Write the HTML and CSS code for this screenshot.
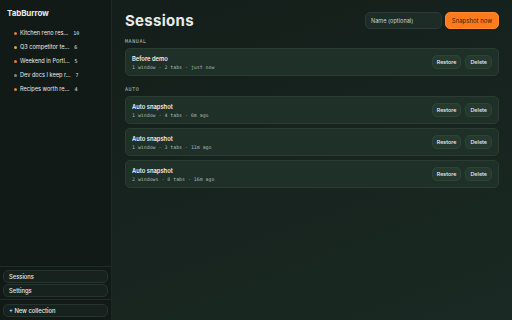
FILE: index.html
```html
<!DOCTYPE html>
<html lang="en">
<head>
  <meta charset="UTF-8" />
  <title>TabBurrow - Sessions</title>
  <link rel="stylesheet" href="styles.css">
</head>
<body>
  <aside class="sidebar">
    <div class="brand">TabBurrow</div>
    <ul class="collections">
      <li><span class="dot orange"></span><span class="name">Kitchen reno res...</span><span class="count">10</span></li>
      <li><span class="dot amber"></span><span class="name">Q3 competitor te...</span><span class="count">6</span></li>
      <li><span class="dot orange"></span><span class="name">Weekend in Portl...</span><span class="count">5</span></li>
      <li><span class="dot grey"></span><span class="name">Dev docs I keep r...</span><span class="count">7</span></li>
      <li><span class="dot orange"></span><span class="name">Recipes worth re...</span><span class="count">4</span></li>
    </ul>
    <div class="side-nav">
      <button class="side-btn">Sessions</button>
      <button class="side-btn">Settings</button>
    </div>
    <div class="side-foot">
      <button class="side-btn">+ New collection</button>
    </div>
  </aside>

  <main class="main">
    <div class="header">
      <h1>Sessions</h1>
      <input class="name-input" placeholder="Name (optional)" />
      <button class="snap-btn">Snapshot now</button>
    </div>

    <div class="group-label">MANUAL</div>
    <div class="card">
      <div class="info">
        <div class="title">Before demo</div>
        <div class="meta">1 window · 2 tabs · just now</div>
      </div>
      <button class="btn">Restore</button>
      <button class="btn">Delete</button>
    </div>

    <div class="group-label">AUTO</div>
    <div class="card">
      <div class="info">
        <div class="title">Auto snapshot</div>
        <div class="meta">1 window · 4 tabs · 6m ago</div>
      </div>
      <button class="btn">Restore</button>
      <button class="btn">Delete</button>
    </div>
    <div class="card">
      <div class="info">
        <div class="title">Auto snapshot</div>
        <div class="meta">1 window · 3 tabs · 11m ago</div>
      </div>
      <button class="btn">Restore</button>
      <button class="btn">Delete</button>
    </div>
    <div class="card">
      <div class="info">
        <div class="title">Auto snapshot</div>
        <div class="meta">2 windows · 8 tabs · 16m ago</div>
      </div>
      <button class="btn">Restore</button>
      <button class="btn">Delete</button>
    </div>
  </main>
</body>
</html>
```

FILE: styles.css
```css
html, body { margin: 0; height: 100%; }
body { display: flex; font-family: Inter, "Noto Sans", sans-serif; color: #e8ece9; background: #16221d; overflow: hidden; }
button { font-family: inherit; cursor: pointer; }

.sidebar { width: 111px; flex: none; display: flex; flex-direction: column; background: #111a17; border-right: 1px solid #1c2823; }
.brand { font-size: 8px; line-height: 10px; font-weight: 700; padding: 8px 7px 0; letter-spacing: -0.1px; }
.collections { list-style: none; margin: 8px 0 0; padding: 0 0 0 14px; flex: 1; }
.collections li { display: flex; align-items: center; height: 14px; font-size: 5.6px; white-space: nowrap; }
.dot { width: 3px; height: 3px; border-radius: 50%; margin-right: 3px; flex: none; }
.dot.orange { background: #f47a2a; }
.dot.amber { background: #e8a23a; }
.dot.grey { background: #7d8a84; }
.count { margin-left: 5px; color: #dfe4e1; font-family: "DejaVu Sans Mono", monospace; font-size: 5px; }

.side-nav { border-top: 1px solid #1f2b26; padding: 3px 3px 2px; display: flex; flex-direction: column; gap: 1px; }
.side-foot { border-top: 1px solid #1f2b26; padding: 4px 3px 3px; }
.side-btn { display: block; width: 100%; height: 13px; text-align: left; padding: 0 5px; font-size: 5.8px; font-weight: 500; color: #e8ece9; background: #17221e; border: 1px solid #26342e; border-radius: 5px; }

.main { flex: 1; padding: 12px 13px 0; background: linear-gradient(160deg, #141e1a 0%, #1a2923 100%); }
.header { display: flex; align-items: center; height: 17px; gap: 3px; }
.header h1 { flex: 1; margin: 0; font-size: 15px; font-weight: 700; letter-spacing: 0.3px; }
.name-input { width: 77px; height: 17px; box-sizing: border-box; padding: 0 5px; font-family: inherit; font-size: 5.6px; color: #e8ece9; background: #1d2c26; border: 1px solid #2b3b34; border-radius: 5px; }
.name-input::placeholder { color: #c9d0cc; }
.snap-btn { width: 54px; height: 17px; padding: 0; font-size: 6px; color: #3a1a05; background: #ff7a1a; border: 1px solid #ff8c33; border-radius: 5px; }

.group-label { font-family: "DejaVu Sans Mono", monospace; font-size: 5px; line-height: 6px; color: #b8c2bd; margin: 10px 0 4px; letter-spacing: 0.6px; }
.header + .group-label { margin-top: 9px; }
.card { display: flex; align-items: center; gap: 4px; height: 28px; box-sizing: border-box; padding: 0 6px; margin-bottom: 4px; background: #1e3028; border: 1px solid #2a3c34; border-radius: 5px; }
.info { flex: 1; }
.title { font-size: 5.8px; font-weight: 600; color: #f1f4f2; }
.meta { font-family: "DejaVu Sans Mono", monospace; font-size: 4.9px; color: #aab5b0; margin-top: 2px; }
.btn { height: 14px; padding: 0 4px; font-size: 5.4px; font-weight: 500; color: #e8ece9; background: #26392f; border: 1px solid #2f4339; border-radius: 5px; }
```
